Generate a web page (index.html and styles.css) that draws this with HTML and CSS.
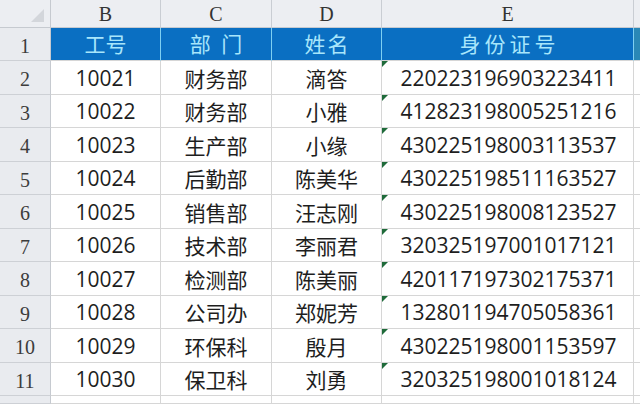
FILE: index.html
```html
<!DOCTYPE html>
<html lang="zh-CN">
<head>
<meta charset="utf-8">
<title>员工信息表</title>
<link rel="stylesheet" href="styles.css">
</head>
<body>
<div class="sheet">
  <div class="c corner"><span class="corner-tri"></span></div>
  <div class="c colh">B</div>
  <div class="c colh">C</div>
  <div class="c colh">D</div>
  <div class="c colh">E</div>
  <div class="c colh edge"></div>

  <div class="c rowh">1</div>
  <div class="c th">工号</div>
  <div class="c th wsp">部 门</div>
  <div class="c th sp2">姓名</div>
  <div class="c th sp4">身份证号</div>
  <div class="c th edge"></div>

  <div class="c rowh">2</div><div class="c td">10021</div><div class="c td">财务部</div><div class="c td">滴答</div><div class="c td id"><i class="flag"></i>220223196903223411</div><div class="c td edge"></div>
  <div class="c rowh">3</div><div class="c td">10022</div><div class="c td">财务部</div><div class="c td">小雅</div><div class="c td id"><i class="flag"></i>412823198005251216</div><div class="c td edge"></div>
  <div class="c rowh">4</div><div class="c td">10023</div><div class="c td">生产部</div><div class="c td">小缘</div><div class="c td id"><i class="flag"></i>430225198003113537</div><div class="c td edge"></div>
  <div class="c rowh">5</div><div class="c td">10024</div><div class="c td">后勤部</div><div class="c td">陈美华</div><div class="c td id"><i class="flag"></i>430225198511163527</div><div class="c td edge"></div>
  <div class="c rowh">6</div><div class="c td">10025</div><div class="c td">销售部</div><div class="c td">汪志刚</div><div class="c td id"><i class="flag"></i>430225198008123527</div><div class="c td edge"></div>
  <div class="c rowh">7</div><div class="c td">10026</div><div class="c td">技术部</div><div class="c td">李丽君</div><div class="c td id"><i class="flag"></i>320325197001017121</div><div class="c td edge"></div>
  <div class="c rowh">8</div><div class="c td">10027</div><div class="c td">检测部</div><div class="c td">陈美丽</div><div class="c td id"><i class="flag"></i>420117197302175371</div><div class="c td edge"></div>
  <div class="c rowh">9</div><div class="c td">10028</div><div class="c td">公司办</div><div class="c td">郑妮芳</div><div class="c td id"><i class="flag"></i>132801194705058361</div><div class="c td edge"></div>
  <div class="c rowh">10</div><div class="c td">10029</div><div class="c td">环保科</div><div class="c td">殷月</div><div class="c td id"><i class="flag"></i>430225198001153597</div><div class="c td edge"></div>
  <div class="c rowh">11</div><div class="c td">10030</div><div class="c td">保卫科</div><div class="c td">刘勇</div><div class="c td id"><i class="flag"></i>320325198001018124</div><div class="c td edge"></div>

  <div class="c rowh"></div><div class="c td"></div><div class="c td"></div><div class="c td"></div><div class="c td"></div><div class="c td edge"></div>
</div>
</body>
</html>
```

FILE: styles.css
```css
html, body {
  margin: 0;
  padding: 0;
  width: 640px;
  height: 404px;
  overflow: hidden;
  background: #ffffff;
}

.sheet {
  display: grid;
  grid-template-columns: 51px 110px 111px 110px 252px 6px;
  grid-template-rows: 28px 33px 34px 33px 34px 33px 34px 33px 34px 33px 34px 33px 8px;
  width: 640px;
  height: 404px;
  overflow: hidden;
  font-family: "Open Sans", "Noto Sans CJK SC", sans-serif;
  color: #1e1e1e;
}

.c {
  box-sizing: border-box;
  display: flex;
  align-items: center;
  justify-content: center;
  border-right: 1px solid #d6d6d6;
  border-bottom: 1px solid #d6d6d6;
  position: relative;
  white-space: nowrap;
  overflow: hidden;
}

.corner {
  background: #eceef2;
  border-right: 1px solid #c6cad0;
  border-bottom: 1px solid #c6cad0;
}

.corner-tri {
  position: absolute;
  right: 6px;
  bottom: 5px;
  width: 0;
  height: 0;
  border-left: 13px solid transparent;
  border-bottom: 13px solid #d3d6db;
}

.colh {
  background: #eceef2;
  border-right: 1px solid #c9cdd3;
  border-bottom: 1px solid #c6cad0;
  font-family: "Liberation Serif", "DejaVu Serif", serif;
  font-size: 20px;
  color: #333333;
  padding-top: 2px;
}

.rowh {
  background: #e9ebef;
  border-right: 1px solid #c6cad0;
  border-bottom: 1px solid #cdd0d5;
  font-family: "Liberation Serif", "DejaVu Serif", serif;
  font-size: 20px;
  color: #3c3c3c;
  padding-top: 4px;
}

.th {
  background: #0a6fc2;
  color: #a8e6fb;
  font-size: 21px;
  border-right: 1px solid #7fd0f2;
  border-bottom: 1px solid #d6d6d6;
  padding-bottom: 2px;
}

.th.wsp {
  word-spacing: 5px;
}

.th.sp2 {
  letter-spacing: 2px;
  padding-left: 2px;
}

.th.sp4 {
  letter-spacing: 4px;
  padding-left: 4px;
}

.th.edge {
  background: #2a88b6;
  border-right: none;
}

.colh.edge {
  border-right: none;
}

.td {
  font-size: 21px;
  background: #ffffff;
}

.td.edge {
  border-right: none;
}

.td.id {
  padding-left: 2px;
}

.flag {
  position: absolute;
  left: 0;
  top: 0;
  width: 0;
  height: 0;
  border-top: 6px solid #1f6b3a;
  border-right: 6px solid transparent;
}
```
